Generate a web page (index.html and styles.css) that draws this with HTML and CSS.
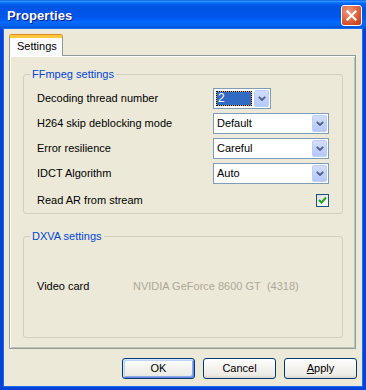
FILE: index.html
```html
<!DOCTYPE html>
<html>
<head>
<meta charset="utf-8">
<link rel="stylesheet" href="styles.css">
</head>
<body>
<div class="window">
  <div class="titlebar">
    <span class="title">Properties</span>
    <span class="close"><svg width="11" height="11" viewBox="0 0 11 11"><path d="M1.5 1.5 L9.5 9.5 M9.5 1.5 L1.5 9.5" stroke="#fff" stroke-width="2.2" stroke-linecap="square"/></svg></span>
  </div>
  <div class="client">
    <div class="tabs"><div class="tab active">Settings</div></div>
    <div class="panel">
      <fieldset class="group g1">
        <legend>FFmpeg settings</legend>
        <div class="grid">
          <span class="label">Decoding thread number</span>
          <div class="combo small"><span class="value selected"><span class="sel-text">2</span></span><span class="dropbtn"><svg width="8" height="5" viewBox="0 0 8 5"><path d="M0.8 0.8 L4 4 L7.2 0.8" fill="none" stroke="#4D6185" stroke-width="1.8"/></svg></span></div>
          <span class="label">H264 skip deblocking mode</span>
          <div class="combo"><span class="value">Default</span><span class="dropbtn"><svg width="8" height="5" viewBox="0 0 8 5"><path d="M0.8 0.8 L4 4 L7.2 0.8" fill="none" stroke="#4D6185" stroke-width="1.8"/></svg></span></div>
          <span class="label">Error resilience</span>
          <div class="combo"><span class="value">Careful</span><span class="dropbtn"><svg width="8" height="5" viewBox="0 0 8 5"><path d="M0.8 0.8 L4 4 L7.2 0.8" fill="none" stroke="#4D6185" stroke-width="1.8"/></svg></span></div>
          <span class="label">IDCT Algorithm</span>
          <div class="combo"><span class="value">Auto</span><span class="dropbtn"><svg width="8" height="5" viewBox="0 0 8 5"><path d="M0.8 0.8 L4 4 L7.2 0.8" fill="none" stroke="#4D6185" stroke-width="1.8"/></svg></span></div>
          <span class="label check-row">Read AR from stream</span>
          <span class="checkbox check-row"><svg width="9" height="9" viewBox="0 0 9 9"><path d="M1 4 L3.5 6.5 L8 1.5" fill="none" stroke="#21A121" stroke-width="2"/></svg></span>
        </div>
      </fieldset>
      <fieldset class="group g2">
        <legend>DXVA settings</legend>
        <div class="info-row">
          <span class="label info-label">Video card</span>
          <span class="info-value">NVIDIA GeForce 8600 GT&nbsp; (4318)</span>
        </div>
      </fieldset>
    </div>
    <div class="buttons">
      <button class="btn default">OK</button>
      <button class="btn">Cancel</button>
      <button class="btn"><u>A</u>pply</button>
    </div>
  </div>
</div>
</body>
</html>
```
FILE: styles.css
```css
html, body {
  margin: 0;
  padding: 0;
}
body {
  width: 366px;
  height: 390px;
  font-family: "Liberation Sans", Arial, sans-serif;
  font-size: 11px;
  color: #000;
}
.window {
  width: 366px;
  height: 390px;
  box-sizing: border-box;
  background: #0841D6;
  display: flex;
  flex-direction: column;
}
.titlebar {
  height: 29px;
  flex: none;
  display: flex;
  align-items: center;
  justify-content: space-between;
  padding: 0 4px 0 7px;
  background: linear-gradient(to bottom, #0058EE 0%, #3593FF 4%, #288EFF 6%, #127DFF 8%, #036FFC 10%, #0262EE 14%, #0057E5 20%, #0054E3 24%, #0055EB 56%, #005BF5 66%, #026AFE 76%, #0062EF 86%, #0057E0 94%, #0050D4 100%);
}
.title {
  color: #fff;
  font-weight: bold;
  font-size: 13px;
  letter-spacing: 0.1px;
  text-shadow: 1px 1px 0 #0A1D8C;
  margin-top: 1px;
}
.close {
  width: 21px;
  height: 21px;
  box-sizing: border-box;
  border: 1px solid #fff;
  border-radius: 3px;
  background: radial-gradient(circle at 35% 30%, #EC9A7E 0%, #E06A46 45%, #CC4622 80%, #B93715 100%);
  display: flex;
  align-items: center;
  justify-content: center;
  margin-top: 1px;
}
.close svg { display: block; }
.client {
  flex: 1;
  margin: 0 4px 4px 4px;
  background: #ECE9D8;
  padding: 6px 6px 0 5px;
  box-shadow: 0 0 0 1px #166AEE;
  display: flex;
  flex-direction: column;
}
.tabs {
  height: 20px;
  display: flex;
  align-items: flex-end;
}
.tab {
  position: relative;
  z-index: 1;
  height: 21px;
  width: 54px;
  box-sizing: border-box;
  margin-bottom: -1px;
  border: 1px solid #919B9C;
  border-bottom: none;
  border-top: 3px solid #FFC83C;
  border-radius: 3px 3px 0 0;
  background: #FCFCFE;
  box-shadow: 0 -1px 0 #E68B2C;
  padding: 2px 0 0 7px;
  line-height: 13px;
}
.panel {
  height: 294px;
  box-sizing: border-box;
  border: 1px solid #919B9C;
  box-shadow: inset 1px 1px 0 #FFFFFF, inset -1px -1px 0 #C4C3B7;
  padding: 12px 12px 0 13px;
}
.group {
  margin: 0;
  padding: 0;
  border: 1px solid #D0D0BF;
  border-radius: 3px;
  min-width: 0;
}
.group legend {
  margin-left: 6px;
  padding: 0 2px 0 2px;
  color: #0046D5;
  line-height: 13px;
  font-size: 11px;
}
.g1 .grid {
  display: grid;
  grid-template-columns: 1fr 116px;
  grid-auto-rows: 21px;
  row-gap: 4px;
  align-items: center;
  padding: 7px 13px 4px 13px;
}
.label {
  line-height: 13px;
  white-space: nowrap;
}
.check-row {
  margin-top: 6px;
  align-self: start;
}
.g1 .grid .label.check-row {
  margin-top: 6px;
  height: 13px;
}
.combo {
  height: 21px;
  box-sizing: border-box;
  border: 1px solid #7F9DB9;
  background: #fff;
  display: flex;
  align-items: stretch;
  padding: 1px;
}
.combo.small {
  width: 58px;
}
.value {
  flex: 1;
  padding-left: 2px;
  line-height: 17px;
  font-size: 11px;
}
.value.selected {
  margin: 1px 2px 1px 1px;
  padding-left: 1px;
  border: 1px dotted #000;
  display: flex;
  align-items: center;
  background: linear-gradient(#316AC5, #316AC5) padding-box, linear-gradient(#DDB24E, #DDB24E) border-box;
}
.sel-text {
  color: #fff;
  font-size: 12px;
  line-height: 13px;
}
.dropbtn {
  width: 15px;
  box-sizing: border-box;
  border: 1px solid #BDCEF8;
  border-radius: 2px;
  background: linear-gradient(to bottom, #D2DEFB 0%, #C2D2F9 50%, #B5C8F7 100%);
  display: flex;
  align-items: center;
  justify-content: center;
}
.dropbtn svg { display: block; }
.checkbox {
  justify-self: end;
  width: 13px;
  height: 13px;
  box-sizing: border-box;
  border: 1px solid #1C5180;
  background: linear-gradient(135deg, #DCDCD7 0%, #F2F2EE 60%, #FFFFFF 100%);
  display: flex;
  align-items: center;
  justify-content: center;
}
.checkbox svg { display: block; }
.g2 {
  margin-top: 16px;
}
.info-row {
  display: flex;
  padding: 37px 13px 44px 13px;
  line-height: 13px;
}
.info-label {
  width: 96px;
}
.info-value {
  color: #ACA899;
  white-space: nowrap;
}
.buttons {
  display: flex;
  justify-content: flex-end;
  gap: 8px;
  margin-top: 9px;
  margin-right: -1px;
}
.btn {
  width: 73px;
  height: 21px;
  box-sizing: border-box;
  border: 1px solid #003C74;
  border-radius: 3px;
  background: linear-gradient(to bottom, #FFFFFF 0%, #F5F4F0 40%, #ECEBE5 85%, #D8D2C6 100%);
  font-family: "Liberation Sans", Arial, sans-serif;
  font-size: 11px;
  color: #000;
  padding: 0;
  line-height: 17px;
}
.btn.default {
  box-shadow: inset 1px 1px 0 #CEE7FF, inset -1px -1px 0 #6982EE, inset 2px 2px 0 #BCD4F6, inset -2px -2px 0 #89ADE4;
}
```
